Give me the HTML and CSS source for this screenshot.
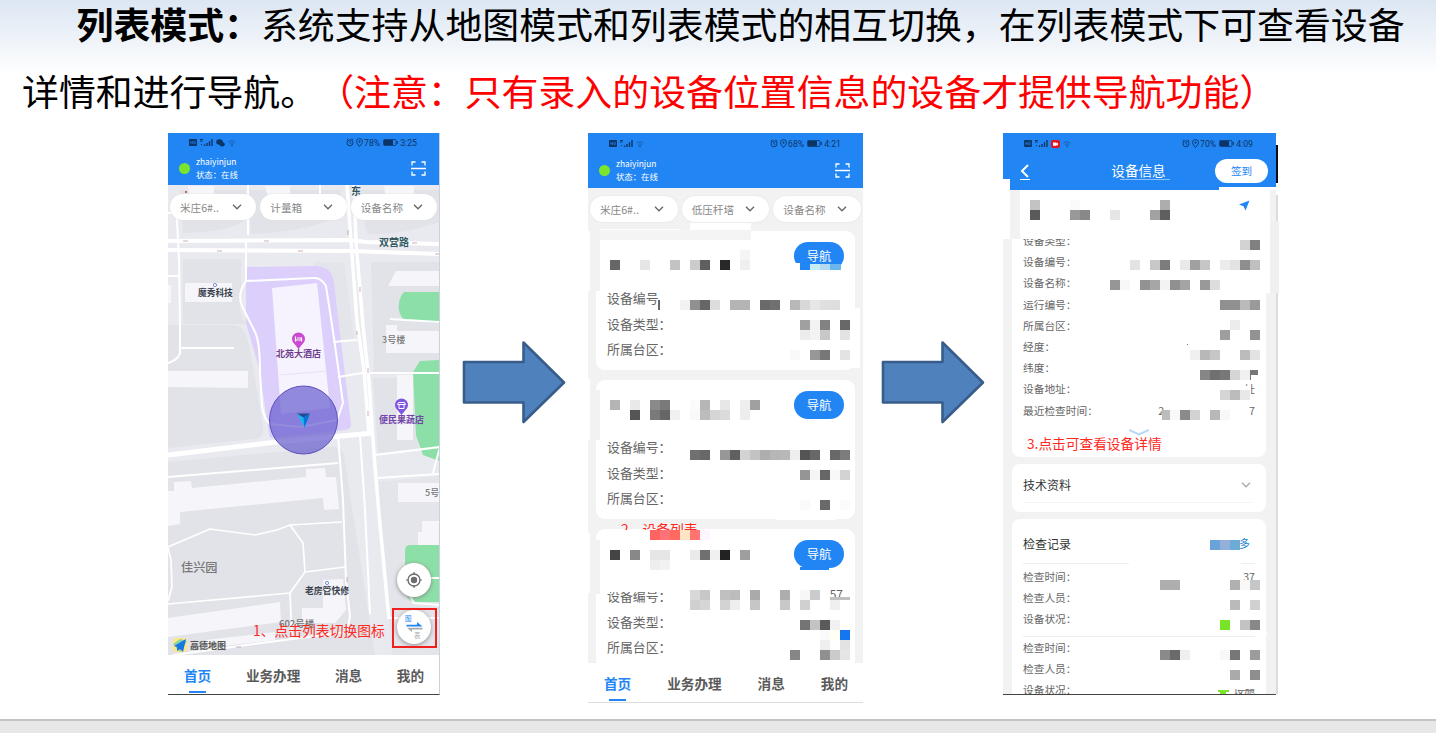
FILE: index.html
```html
<!DOCTYPE html>
<html lang="zh-CN">
<head>
<meta charset="utf-8">
<title>列表模式</title>
<link rel="stylesheet" href="styles.css">
</head>
<body>
<svg class="defs" width="0" height="0">
  <symbol id="scan" viewBox="0 0 15 15"><path d="M1 4.5V1h3.5M10.500 1H14v3.500M14 10.500V14h-3.500M4.500 14H1v-3.500M0 7.500h15" fill="none" stroke="#fff" stroke-width="1.300"/></symbol>
  <symbol id="chev" viewBox="0 0 10 6"><path d="M1 .8l4 4 4-4" fill="none" stroke="currentColor" stroke-width="1.300"/></symbol>
  <symbol id="signal" viewBox="0 0 24 9"><rect x="0" y="1" width="8" height="7" rx="1" fill="#0b3566"/><path d="M1.800 3v3M3.600 3v3M1.800 4.500h1.800M5 3v3h.7l.8-.8V3.800L5.700 3z" stroke="#2185f4" stroke-width=".6" fill="none"/><path d="M11 1.500h3M11 3h2.500M12 6.500h1" stroke="#0b3566" stroke-width="1"/><path d="M15.500 8V6.500M18 8V5M20.500 8V3.200M23 8V1" stroke="#0b3566" stroke-width="1.400"/></symbol>
  <symbol id="wifi" viewBox="0 0 8 8"><path d="M.5 3.200Q4 0 7.500 3.200M1.800 4.600Q4 2.600 6.200 4.600M3 5.900Q4 5 5 5.900L4 7.200z" fill="none" stroke="#155aa8" stroke-width=".8"/></symbol>
  <symbol id="clock" viewBox="0 0 18 9"><g fill="none" stroke="#0b3566" stroke-width=".9"><circle cx="4" cy="4.800" r="3"/><path d="M4 3v2l1.300.6M.8 2L2.300.7M7.200 2L5.700.7"/><path d="M13.500 8.500Q10.500 5.500 10.500 3.600a3 3 0 016 0Q16.500 5.500 13.500 8.500z"/><circle cx="13.500" cy="3.600" r=".7"/></g></symbol>
  <symbol id="battery" viewBox="0 0 15 7"><rect x=".5" y=".5" width="12.500" height="6" rx="1" fill="none" stroke="#0b3566" stroke-width=".8"/><rect x="1" y="1" width="9" height="5" fill="#0b3566"/><path d="M14.300 2v3" stroke="#0b3566"/></symbol>
  <symbol id="arrow" viewBox="0 0 104 84"><path d="M2 21h59.500V1.500L102 41.500 61.500 81V61.500H2z" fill="#4f81bd" stroke="#385d8a" stroke-width="2.600" stroke-linejoin="round"/></symbol>
</svg>
<main class="slide">
  <p class="title"><b>列表模式：</b>系统支持从地图模式和列表模式的相互切换，在列表模式下可查看设备<br>详情和进行导航。<span class="note">（注意：只有录入的设备位置信息的设备才提供导航功能）</span></p>
  <div class="stage">

    <section class="phone map-phone">
      <header class="head">
        <div class="status"><svg width="24" height="9"><use href="#signal"/></svg><svg width="9" height="8" viewBox="0 0 9 8"><ellipse cx="3.500" cy="3" rx="3.300" ry="2.700" fill="#0b3566"/><ellipse cx="6.200" cy="5.200" rx="2.600" ry="2.200" fill="#0b3566"/></svg><svg width="8" height="8"><use href="#wifi"/></svg><i></i><svg width="18" height="9"><use href="#clock"/></svg><span>78%</span><svg width="15" height="7"><use href="#battery"/></svg><span>3:25</span></div>
        <div class="user"><em></em><p>zhaiyinjun<br>状态：在线</p><svg width="15" height="15"><use href="#scan"/></svg></div>
      </header>
      <div class="map">
        <svg class="map-art" viewBox="168 185 272 470" width="272" height="470">
          <rect x="168" y="185" width="272" height="470" fill="#e9eaef"/>
          <g fill="#e1e3e8">
            <path d="M180 190h65v30q-15 12-62 13zM249 190h92v22q-20 19-90 22zM358 190h82v32q-40 14-73 12z"/>
            <path d="M168 325h65q12 0 16 20l14 80q2 12-8 14l-87 9zM183 259h58v25q-4 30 5 40h-63z"/>
            <path d="M371 262q10 0 60 0h9v110h-66zM373 378h67v70l-62 5zM168 462l165-15q12 0 12 15l30 193H168z"/>
            <path d="M378 482l62-6v179h-48zM314 262h30l10 76-20 2-3-55q-2-8-17-8z" opacity=".8"/>
          </g>
          <g fill="#f6f6fa">
            <path d="M188 186h26v18h-24zM265 186h25v18h-20zM384 186h30v18h-27zM185 283h47v19h-47zM168 285h3v18h-3zM168 371h80v17l-80-1zM168 491h6v-9l17-1 1 7 114-11v-8l19-1 1 9h10l3 32-15 1-1-12-143 14v12l-12 2zM386 325h11v6h43v22h-54zM397 375h16v65h-16zM398 483h42v19h-42zM396 271h44v15h-52zM422 521h18v24h-22v-13h4zM168 618l112-16 1 20-113 15zM302 608h21v-28l20-1 3 31-11 13h-33zM205 640l70-8v8l-70 8z"/>
          </g>
          <path d="M246 267l68-1q19 0 20 18l17 140q0 5-5 6l-73 8q-4 0-4-5l-10-65-13-45z" fill="#dccffb"/>
          <path d="M272 288l45-5 13 125-49 6z" fill="#f6f3ff"/><path d="M279 375l48-4" stroke="#e7e2f3"/>
          <g fill="#8cdfa6"><path d="M404 292h36v31l-36-3q-9-10-3-24zM420 361l20-1v101l-17-6-7-20-3-63zM410 545h30v57h-22q-13 0-13-14v-37q0-6 5-6z"/></g>
          <g fill="none" stroke="#fff" stroke-linejoin="round">
            <path d="M168 241l182-1 16 2 74 2M168 250l182 1 90 3" stroke-width="4"/>
            <path d="M347 185l4 56 6 80 7 50 5 62M354 185l2 57 7 84 6 55 5 73 5 60 10 105" stroke-width="3.500"/>
            <path d="M168 455l100-12 105-10" stroke-width="5"/>
            <path d="M176 200l3 60 1 65v28q-2 7-12 10M168 276h11M180 348h54M246 241v40q-10 14-3 27l12 24q5 10 5 40l2 34q2 14 8 18l30 3 37-7 6-17-9-65-8-52q-5-9-13-8l-67 3M168 213h8M248 185v50M320 185v35M168 477l170-14M338 435l5 65 3 80 4 36-3 16-55 7-119 16M360 435l5 75 5 104M333 342l24-2M338 377l24-4h78M375 455l65-8-7 26M377 478l63-4M390 319l50 3M416 583v-5h24M400 578l14 25 26 2M389 618h51" stroke-width="2"/>
            <path d="M168 547l42-18 45 6 22-5 13-5 52-3M290 525l13 18 2 29 40-5M305 572l-15 21-122 11M290 593l2 47M168 548l3 12 1 27-4 14" stroke-width="1.700"/>
          </g>
          <g stroke="#b98f93" fill="#b98f93" stroke-width=".7"><path d="M183 241h5M264 241h5M217 251h5M298 251h5M412 243h5M435 254h4M348 230v5M360 287v5M357 331v4M368 368v5M368 411v5M347 577v5M236 647h5"/></g>
          <circle cx="186" cy="192" r="1" fill="#b33"/><g fill="#fff" stroke="#5a74c8" stroke-width=".8"><circle cx="215" cy="285" r="1.600"/><circle cx="327" cy="583" r="1.600"/></g>
          <path d="M298.500 349l-4-5a6.500 6.500 0 118 0z" fill="#c94bd0"/><path d="M295.500 336.500v5M295.500 340h6v1.500M297 338h4.500v2" stroke="#fff" stroke-width="1.200" fill="none"/>
          <path d="M401.500 415l-4-5a6.500 6.500 0 118 0z" fill="#8055df"/><path d="M398.500 402.500h6l1 2h-8zM399 405v3.500h5V405" stroke="#fff" fill="none"/>
          <circle cx="303.500" cy="420" r="34" fill="#655bcd" fill-opacity=".7" stroke="#5b50bb"/>
          <path d="M297 414l6.500 3.500 6.500-4-5.500 14z" fill="#18b5f2"/><path d="M303.500 417.500l6.500-4-5.500 14z" fill="#0873dc"/><path d="M297 413.500h13l-6.500 4z" fill="#234a8c"/>
          <g class="label">
            <text x="351" y="195" fill="#356" font-size="10">东</text><text x="379" y="246" fill="#345a63">双营路</text>
            <text x="198" y="296" fill="#39404d" font-size="8.700">魔秀科技</text>
            <text x="276" y="357" fill="#6f3d8d" font-size="9">北苑大酒店</text><text x="379" y="423" fill="#7146a8" font-size="9">便民果蔬店</text>
            <text x="382" y="343" class="plain" font-size="9">3号楼</text><text x="425" y="496" class="plain" font-size="9">5号</text>
            <text x="181" y="572" class="plain" font-size="12.200">佳兴园</text><text x="305" y="594" fill="#39404d" font-size="8.800">老房管快修</text>
            <text x="279" y="627" class="plain" font-size="9.500">602号楼</text><text x="190" y="649" fill="#555" font-size="9">高德地图</text>
          </g>
          <path d="M173 642q0-4 4-4h6q4 0 4 4v6q0 4-4 4h-6q-4 0-4-4z" fill="#ffe680"/><path d="M173 644l7-5 7 2-7 11z" fill="#8bd3a0"/><path d="M174 646l12-7-3 13-3-3-3 2v-4z" fill="#1577e6"/>
        </svg>
        <div class="filters"><span>米庄6#..<svg width="10" height="6"><use href="#chev"/></svg></span><span>计量箱<svg width="10" height="6"><use href="#chev"/></svg></span><span>设备名称<svg width="10" height="6"><use href="#chev"/></svg></span></div>
        <div class="fab locate"><svg width="18" height="18" viewBox="0 0 18 18"><circle cx="9" cy="9" r="6" fill="none" stroke="#6c6c6c" stroke-width="1.300"/><circle cx="9" cy="9" r="3.200" fill="#6c6c6c"/><path d="M9 1v3M9 14v3M1 9h3M14 9h3" stroke="#6c6c6c" stroke-width="1.200"/></svg></div>
        <div class="fab switch"><b>图</b><svg width="17" height="10" viewBox="0 0 17 10"><path d="M.5 4.500H16.500L11 0v2.800H.5z" fill="#2185f4"/><path d="M16.500 5.800H1l5 4.200V7.500h10.500z" fill="#aaa"/></svg><b>表</b></div>
        <div class="frame"></div>
        <div class="tip">1、点击列表切换图标</div>
      </div>
      <nav class="tabs"><b class="on">首页</b><b>业务办理</b><b>消息</b><b>我的</b></nav>
    </section>

    <svg class="arrow" width="104" height="84"><use href="#arrow"/></svg>

    <section class="phone list-phone">
      <header class="head">
        <div class="status"><svg width="24" height="9"><use href="#signal"/></svg><svg width="8" height="8"><use href="#wifi"/></svg><i></i><svg width="18" height="9"><use href="#clock"/></svg><span>68%</span><svg width="15" height="7"><use href="#battery"/></svg><span>4:21</span></div>
        <div class="user"><em></em><p>zhaiyinjun<br>状态：在线</p><svg width="15" height="15"><use href="#scan"/></svg></div>
      </header>
      <div class="list">
        <div class="filters"><span>米庄6#..<svg width="10" height="6"><use href="#chev"/></svg></span><span>低压杆塔<svg width="10" height="6"><use href="#chev"/></svg></span><span>设备名称<svg width="10" height="6"><use href="#chev"/></svg></span></div>
        <article class="card"><button>导航</button><p>设备编号</p><p>设备类型：</p><p>所属台区：</p></article>
        <article class="card"><button>导航</button><p>设备编号：</p><p>设备类型：</p><p>所属台区：</p></article>
        <article class="card"><div class="tip cut">2、设备列表</div><button>导航</button><p>设备编号：<span>57</span></p><p>设备类型：</p><p>所属台区：</p></article>
      </div>
      <nav class="tabs"><b class="on">首页</b><b>业务办理</b><b>消息</b><b>我的</b></nav>
      <svg class="mosaic" id="m2" viewBox="588 133 275 570" width="275" height="570"></svg>
    </section>

    <svg class="arrow" width="104" height="84"><use href="#arrow"/></svg>

    <section class="phone info-phone">
      <header class="head">
        <div class="status"><svg width="24" height="9"><use href="#signal"/></svg><svg width="9" height="8" viewBox="0 0 9 8"><rect width="9" height="8" rx="2" fill="#e5141e"/><path d="M2 2.500h3.500v1L7 2.700v2.800l-1.500-.8v1H2z" fill="#fff"/></svg><svg width="8" height="8"><use href="#wifi"/></svg><i></i><svg width="18" height="9"><use href="#clock"/></svg><span>70%</span><svg width="15" height="7"><use href="#battery"/></svg><span>4:09</span></div>
        <div class="bar"><svg width="9" height="14" viewBox="0 0 9 14"><path d="M8 1L2 7l6 6" fill="none" stroke="#fff" stroke-width="2"/></svg><h2>设备信息</h2><span>签到</span></div>
      </header>
      <div class="info">
        <article class="detail">
          <svg class="nav-icon" width="11" height="11" viewBox="0 0 11 11"><path d="M10.500 .5L0 4.500l4.500 1.700L6.500 10.500z" fill="#2185f4"/></svg>
          <p>设备类型：</p><p>设备编号：</p><p>设备名称：</p><p>运行编号：</p><p>所属台区：</p><p>经度：</p><p>纬度：</p><p>设备地址：<span>址</span></p><p>最近检查时间：<span>2<i></i>7</span></p>
          <svg class="more" width="20" height="7" viewBox="0 0 20 7"><path d="M0 1l10 4.500L20 1" fill="none" stroke="#b5d7fa" stroke-width="2"/></svg>
          <div class="tip">3.点击可查看设备详情</div>
        </article>
        <article class="tech"><h3>技术资料<svg width="10" height="6"><use href="#chev"/></svg></h3></article>
        <article class="checks"><h3>检查记录<span>多</span></h3>
          <div><p>检查时间：<span>37</span></p><p>检查人员：</p><p>设备状况：</p></div>
          <div><p>检查时间：</p><p>检查人员：</p><p>设备状况：<span>设施</span></p></div>
        </article>
      </div>
      <svg class="mosaic" id="m3" viewBox="1003 133 277 562" width="277" height="562"></svg>
    </section>
  </div>
</main>
<footer class="foot"></footer>
<script src="mosaic.js"></script>
</body>
</html>
```
FILE: styles.css
```css
* { box-sizing: border-box; }
body { margin: 0; width: 1436px; height: 733px; overflow: hidden; display: flex; flex-direction: column; font-family: "Noto Sans CJK SC", sans-serif; background: #fff; text-spacing-trim: space-all; }
p, h2, h3 { margin: 0; font-weight: 400; }
.defs { position: absolute; }
.slide { height: 719px; overflow: hidden; background: linear-gradient(#dce6f2, #f1f5fa 45px, #fff 75px); }
.title { height: 133px; padding-left: 22px; text-indent: 54.500px; font-size: 36.900px; line-height: 67px; white-space: nowrap; margin-top: -10px; margin-bottom: 10px; }
.note { color: #f00; }
.stage { display: flex; align-items: flex-start; padding-left: 168px; }
.arrow { flex: none; margin: 208px 22px 0 22px; }
.phone { position: relative; flex: none; display: flex; flex-direction: column; }
.map-phone { width: 272px; height: 562px; border-bottom: 1px solid #444; border-right: 1px solid #c9d2dd; }
.list-phone { width: 275px; height: 570px; border-bottom: 1px solid #ddd; }
.list-phone + .arrow { margin: 208px 18px 0; }
.info-phone { width: 273px; height: 562px; border-bottom: 1px solid #444; }
.head { flex: none; height: 52px; background: #2185f4; color: #fff; }
.list-phone .head { height: 55px; }
.info-phone .head { height: 57px; }
.status { display: flex; align-items: center; height: 19px; padding: 0 22px 0 21px; font: 8.700px Roboto, sans-serif; color: #0b3566; }
.status > svg + svg { margin-left: 3px; }
.status i { flex: 1; }
.status span { margin: 0 3px 0 0; }
.status span:last-child { margin: 0 0 0 2px; }
.list-phone .status { height: 21px; }
.info-phone .status { height: 21px; padding-right: 23px; }
.user { display: flex; align-items: center; height: 33px; padding: 0 13px 0 11px; }
.user em { width: 11px; height: 11px; border-radius: 50%; background: #7be52b; margin-right: 6px; }
.user p { flex: 1; font-size: 8.400px; line-height: 13px; margin-top: -2px; }
.filters { position: relative; display: flex; gap: 4px; padding: 9px 2px 0; color: #888; }
.filters span { flex: 1; display: flex; align-items: center; justify-content: space-between; height: 26px; padding: 0 14px 0 10px; border-radius: 13px; background: #fff; font-size: 10.600px; box-shadow: 0 0 2px #ddd; }
.filters svg { color: #666; }
.map { position: relative; height: 470px; flex: none; overflow: hidden; }
.map-art { position: absolute; left: 0; top: 0; }
.label { font-weight: 700; font-size: 10px; }
.label .plain { font-weight: 500; fill: #777; }
.fab { position: absolute; left: 229px; width: 34px; height: 34px; border-radius: 50%; background: #fff; box-shadow: 0 1px 4px #888; display: flex; align-items: center; justify-content: center; }
.locate { top: 378px; }
.switch { top: 425px; flex-direction: column; font-size: 6.500px; line-height: 7px; }
.switch b { align-self: flex-start; margin-left: 8px; color: #2185f4; font-weight: 400; }
.switch b:last-child { margin-left: 17px; color: #aaa; }
.frame { position: absolute; left: 224px; top: 423px; width: 45px; height: 40px; border: 2px solid #f0201c; }
.tip { position: absolute; color: #ff2a1e; font-size: 13.800px; line-height: 18px; white-space: nowrap; }
.map .tip { left: 85px; top: 436px; }
.tabs { display: flex; flex: 1; justify-content: space-between; background: #fff; padding: 1px 15px 0 16px; color: #5a5a5a; font-size: 13.600px; line-height: 38px; }
.tabs b { font-weight: 700; position: relative; }
.tabs .on { color: #2185f4; }
.tabs .on::after { content: ""; position: absolute; left: 5px; bottom: 1px; width: 17px; height: 2px; background: #2185f4; }
.list { height: 475px; flex: none; background: #f2f2f2; overflow: hidden; }
.list .filters { padding-top: 8px; margin-bottom: 9px; }
.card { position: relative; height: 139px; margin: 0 8px 10px; border-radius: 9px; background: #fff; padding: 54px 12px 0 11px; color: #666; font-size: 12.900px; line-height: 25.500px; }
.card p { display: flex; justify-content: space-between; }
.card p span { font-size: 12px; margin-top: -2px; height: 20px; }
.card button { position: absolute; right: 11px; top: 11px; width: 50px; height: 28px; border: 0; border-radius: 14px; background: #2185f4; color: #fff; font: 12.300px "Noto Sans CJK SC", sans-serif; padding: 0; }
.card .cut { left: 25px; top: -8px; height: 9px; overflow: hidden; font-size: 13.800px; line-height: 17px; }
.mosaic { position: absolute; left: 0; top: 0; shape-rendering: crispEdges; }
.bar { display: grid; grid-template-columns: 42px 1fr 53px; align-items: center; height: 34px; padding: 0 8px 0 17px; }
.bar h2 { font-size: 13.600px; text-align: center; margin-top: -2px; }
.bar span { height: 24px; line-height: 24px; border-radius: 12px; background: #fff; color: #2185f4; font-size: 10.600px; text-align: center; }
.info { background: #f2f2f2; height: 504px; overflow: hidden; padding: 0 10px 0 9px; display: flex; flex-direction: column; gap: 7px; color: #666; font-size: 10.700px; line-height: 21.200px; }
.info article { position: relative; flex: none; background: #fff; border-radius: 8px; padding: 0 11px; }
.info p, .info h3 { display: flex; justify-content: space-between; align-items: center; }
.info h3 { font-size: 12px; color: #333; }
.info .detail { height: 267px; padding-top: 40px; }
.detail p i { display: inline-block; width: 85px; }
.nav-icon { position: absolute; left: 227px; top: 10px; }
.more { position: absolute; left: 117px; top: 239px; }
.detail .tip { left: 15px; top: 244px; font-size: 13.700px; }
.info .tech { height: 48px; padding-right: 15px; }
.tech svg { color: #aaa; }
.tech h3 { height: 36px; margin-top: 3px; border-bottom: 1px solid #f3f3f3; }
.info .checks { height: 200px; }
.checks h3 { height: 45px; padding-top: 6px; border-bottom: 1px solid #eee; margin-bottom: 2px; }
.checks h3 span { color: #2185d4; font-size: 11px; padding-right: 5px; }
.checks div { height: 71px; border-bottom: 1px solid #eee; }
.foot { height: 14px; border-top: 2px solid #c4c4c4; background: #e7e7e7; }
```
FILE: mosaic.js
```js
const W = '#fff';
// Each row: y, then x / colour pairs for 10px cells. Areas: x, y, width, height, colour.
const views = {
  m2: {
    areas: [
      [588,231,2,60,W],[588,379,2,61,W],[588,533,2,60,W],
      [690,223,61,7,W],[600,229,80,1,W],[600,230,151,10,'#f4f4f4'],[600,240,30,51,W],
      [590,231,10,60,'#f2f2f2'],[596,291,10,70,W],[850,308,10,60,W],
      [610,380,30,10,W],[600,390,30,50,W],[590,390,10,50,'#f2f2f2'],
      [590,540,10,54,'#f2f2f2'],[600,540,10,54,W],
      [776,518,60,2,W],[604,589,55,3,W],[658,300,2,10,'#666'],
      [793,263,7,8,W],[800,264,10,6,'#2185f4'],[800,270,45,3,W],[810,264,10,6,'#c5edf4'],[820,264,10,6,'#b2dbf1'],[830,264,11,6,'#69b5ee'],
      [800,567,29,3,'#2185f4'],[828,598,24,5,W],[830,597,20,3,'#c0c0c0']
    ],
    rows: [
      [250,740,'f5'],
      [260,610,'66',640,'e6',670,'c3',690,'cb',700,'5f',720,'28',740,'ef'],
      [300,680,'f2',690,'90',700,'66',710,'dd',730,'b4',740,'b4',760,'6a',770,'70',790,'b8',800,'d8',810,'e6',820,'df',830,'de'],
      [320,800,'a0',810,'f2',820,'82',840,'68'],[330,800,'ec',810,'f3',820,'c8',840,'e3'],[350,790,'f9',810,'97',820,'77',840,'e3'],
      [400,610,'b4',630,'e9',650,'8a',660,'7a',690,'fb',700,'b6',720,'e7',740,'ee',750,'a0'],
      [410,630,'55',650,'7a',660,'66',670,'f0',690,'f9',700,'bc',710,'d5',720,'db',740,'ed'],
      [450,690,'70',700,'68',720,'97',730,'60',740,'d3',750,'c3',760,'ae',770,'b6',780,'b8',790,'ee',800,'55',810,'68',830,'68',840,'7c'],
      [470,800,'95',810,'f5',820,'66',830,'f8',840,'d3'],[500,800,'fa',820,'6a',840,'fb'],
      [530,650,'#ff6460',660,'#ff7378',670,'#ff6960',680,'#ffe4c4',690,'#ff7370',700,'#fdf5ff'],
      [550,610,'44',630,'88',650,'e6',660,'e6',690,'ea',700,'70',710,'f0',720,'22',740,'9e'],[560,650,'ee',660,'f2'],
      [590,690,'d8',700,'c7',720,'c0',730,'bc',750,'aa',780,'ad',800,'f7',810,'cb'],
      [600,690,'d0',700,'d6',720,'d3',730,'ee',750,'c6',780,'c8',800,'d0',830,'ef'],
      [620,800,'74',810,'c3',820,'5a',830,'f1'],[630,820,'fa',830,'#fffff5',840,'#1476f0'],[640,820,'ef',840,'e3'],
      [650,790,'86',820,'90',830,'cb',840,'e5']
    ]
  },
  m3: {
    areas: [
      [1003,179,7,60,W],[1010,190,10,49,'#f2f2f2'],[1020,190,30,49,W],[1219,187,57,3,W],
      [1266,190,4,103,W],[1020,232,60,7,W],[1260,190,6,20,W],[1276,145,2,38,'#0a0f1c'],[1276,195,2,499,'#dcdcdc'],[1270,221,9,72,'#f0f0f0'],
      [1020,179,10,1,W],[1120,179,50,1,'#8ec2fb'],
      [1129,561,112,3,W],[1132,632,135,3,W],[1250,370,8,5,'#777'],[1250,375,1,5,'#777'],[1187,344,1,1,'#777'],
      [1235,581,25,6,W],[1218,690,11,2,'#7be52b'],[1220,692,6,2,'#7be52b'],[1240,690,14,1,'#888'],[1234,680,30,9,W],[1242,386,9,12,W],
      [1162,410,8,10,'#bcbcbc']
    ],
    rows: [
      [200,1030,'c3',1070,'fa',1160,'ad'],[210,1030,'5a',1070,'99',1080,'88',1110,'e6',1150,'a2',1160,'5f'],
      [240,1240,'d3',1250,'80'],[260,1130,'e3',1150,'c8',1160,'7c',1180,'e9',1190,'a0',1200,'c6',1220,'ec',1230,'e3',1240,'8e',1250,'c0'],
      [280,1110,'96',1120,'f8',1140,'92',1150,'a6',1160,'f3',1170,'90',1180,'a4',1200,'99',1210,'dd'],
      [300,1220,'90',1230,'90',1240,'ba',1250,'9a'],[320,1230,'ec'],[330,1220,'9e',1250,'92'],
      [350,1190,'f0',1200,'b8',1210,'c6',1240,'bc',1250,'e3'],[370,1200,'86',1210,'70',1220,'78',1230,'d5',1240,'f0'],
      [390,1220,'d5',1230,'bc',1240,'e8'],[410,1170,'f8',1180,'8a',1190,'d3',1210,'b8',1220,'f8'],
      [540,1210,'#6aa3d8',1220,'#94afda',1230,'#6cabd5'],
      [580,1160,'ae',1170,'ae',1230,'b0',1240,'f8',1250,'c6'],[600,1230,'ba',1250,'d0'],[620,1220,'#78e428',1240,'c3',1250,'88'],
      [650,1160,'8a',1170,'6a',1180,'ef',1220,'f8',1230,'77',1250,'9c'],[670,1230,'aa',1250,'8e']
    ]
  }
};
for (const [id, view] of Object.entries(views)) {
  const svg = document.getElementById(id);
  const add = (x, y, w, h, fill) => {
    const r = document.createElementNS('http://www.w3.org/2000/svg', 'rect');
    Object.entries({ x, y, width: w, height: h, fill }).forEach(([k, v]) => r.setAttribute(k, v));
    svg.append(r);
  };
  view.areas.forEach(a => add(...a));
  view.rows.forEach(([y, ...cells]) => {
    for (let i = 0; i < cells.length; i += 2) {
      const c = cells[i + 1];
      add(cells[i], y, 10, 10, c[0] === '#' ? c : '#' + c.repeat(3));
    }
  });
}
```
